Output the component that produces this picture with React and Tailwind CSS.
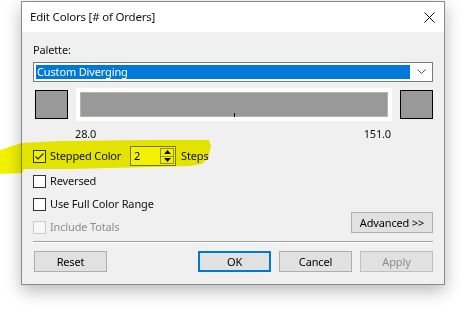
import React from 'react';

const font = { fontFamily: '"Noto Sans", "Open Sans", sans-serif' };

function Check({ checked, disabled }) {
  return (
    <span
      className={`w-[13px] h-[13px] border shrink-0 flex items-center justify-center ${
        disabled ? 'border-[#cccccc] bg-[#f7f7f7]' : 'border-[#333333] bg-white'
      }`}
    >
      {checked && (
        <svg width="11" height="11" viewBox="0 0 11 11">
          <path d="M1.5 5.5 L4 8 L9.5 2.5" fill="none" stroke="#222" strokeWidth="1.1" />
        </svg>
      )}
    </span>
  );
}

function Btn({ children, primary, disabled, className = '' }) {
  return (
    <div
      className={`h-[21px] w-[73px] flex items-center justify-center bg-[#e1e1e1] ${
        primary ? 'border-2 border-[#0078d7]' : 'border border-[#adadad]'
      } ${disabled ? 'bg-[#cccccc] border-[#bfbfbf] text-[#8d8d8d]' : 'text-black'} ${className}`}
    >
      {children}
    </div>
  );
}

export default function App() {
  return (
    <div
      className="w-[469px] h-[319px] bg-white relative overflow-hidden text-[11px] leading-[16px] tracking-[-0.15px]"
      style={font}
    >
      <div className="pt-[1px] pl-[21px]">
        <div className="w-[424px] h-[284px] border border-[#8a8a8a] shadow-[0_6px_16px_rgba(0,0,0,0.28)] flex flex-col">
          {/* title bar */}
          <div className="h-[30px] bg-white flex items-center justify-between pl-[8px] pr-[9px]">
            <span className="text-[#111] text-[11.5px] tracking-[-0.2px]">Edit Colors [# of Orders]</span>
            <svg width="11" height="11" viewBox="0 0 11 11">
              <path d="M0.5 0.5 L10.5 10.5 M10.5 0.5 L0.5 10.5" stroke="#111" strokeWidth="1" />
            </svg>
          </div>

          {/* body */}
          <div className="flex-1 bg-[#f0f0f0] pl-[11px] pr-[11px] pt-[10px] flex flex-col">
            <div className="text-[#111]">Palette:</div>
            <div className="mt-[4px] h-[20px] border border-[#7a7a7a] bg-white flex items-center pl-[2px] pr-[6px]">
              <div className="flex-1 h-[14px] bg-[#0078d7] text-white leading-[14px] pl-[1px]">Custom Diverging</div>
              <svg className="ml-[7px]" width="9" height="6" viewBox="0 0 9 6">
                <path d="M0.5 0.5 L4.5 4.5 L8.5 0.5" fill="none" stroke="#555" strokeWidth="1" />
              </svg>
            </div>

            {/* colour ramp */}
            <div className="mt-[6px] flex items-center">
              <div className="ml-[2px] w-[33px] h-[29px] bg-[#999999] border border-black" />
              <div className="ml-[8px] w-[316px] h-[33px] bg-white p-[4px]">
                <div className="h-full bg-[#999999] border border-[#b4b4a8] relative">
                  <div className="absolute left-[153px] bottom-[-1px] w-[1px] h-[4px] bg-black" />
                </div>
              </div>
              <div className="ml-[8px] w-[33px] h-[29px] bg-[#999999] border border-black" />
            </div>
            <div className="ml-[42px] w-[316px] flex justify-between mt-[5px] text-[#111]">
              <span>28.0</span>
              <span>151.0</span>
            </div>

            {/* stepped */}
            <div className="mt-[4px] flex items-center h-[20px]">
              <Check checked />
              <span className="ml-[4px] w-[80px] text-[#111]">Stepped Color</span>
              <div className="w-[46px] h-[20px] border border-[#7a7a7a] bg-white flex items-center pl-[3px] pr-[1px]">
                <span className="flex-1 text-black">2</span>
                <div className="w-[14px] h-[16px] border border-[#9a9a9a] flex flex-col">
                  <div className="flex-1 flex items-center justify-center border-b border-[#9a9a9a]">
                    <svg width="7" height="4" viewBox="0 0 7 4"><path d="M0 4 L3.5 0 L7 4 Z" fill="#111" /></svg>
                  </div>
                  <div className="flex-1 flex items-center justify-center">
                    <svg width="7" height="4" viewBox="0 0 7 4"><path d="M0 0 L3.5 4 L7 0 Z" fill="#111" /></svg>
                  </div>
                </div>
              </div>
              <span className="ml-[5px] text-[#111]">Steps</span>
            </div>

            <div className="flex items-end">
              <div className="flex flex-col">
                <div className="mt-[7px] h-[16px] flex items-center">
                  <Check />
                  <span className="ml-[4px] text-[#111]">Reversed</span>
                </div>
                <div className="mt-[7px] h-[16px] flex items-center">
                  <Check />
                  <span className="ml-[4px] text-[#111]">Use Full Color Range</span>
                </div>
                <div className="mt-[7px] h-[16px] flex items-center">
                  <Check disabled />
                  <span className="ml-[4px] text-[#8d8d8d]">Include Totals</span>
                </div>
              </div>
              <div className="flex-1" />
              <div className="mb-[2px] h-[21px] w-[82px] bg-[#e1e1e1] border border-[#adadad] flex items-center justify-center text-black">
                Advanced &gt;&gt;
              </div>
            </div>

            <div className="mt-[6px] h-[2px] border-t border-[#a0a0a0] bg-white" />

            <div className="mt-[8px] flex items-center">
              <Btn className="ml-[1px]">Reset</Btn>
              <div className="flex-1" />
              <Btn primary>OK</Btn>
              <Btn className="ml-[8px]">Cancel</Btn>
              <Btn disabled className="ml-[8px]">Apply</Btn>
            </div>
          </div>
        </div>
      </div>

      {/* highlighter stroke */}
      <svg className="absolute left-0 top-0 pointer-events-none mix-blend-multiply" width="469" height="319">
        <path
          d="M0 150 L12 146 L22 143 L60 141 L150 140 L209 140 L211 146 L208 158 L202 164 L190 166 L150 167 L70 169 L24 169 L22 173 L0 174 Z"
          fill="#f2f200"
        />
      </svg>
    </div>
  );
}
